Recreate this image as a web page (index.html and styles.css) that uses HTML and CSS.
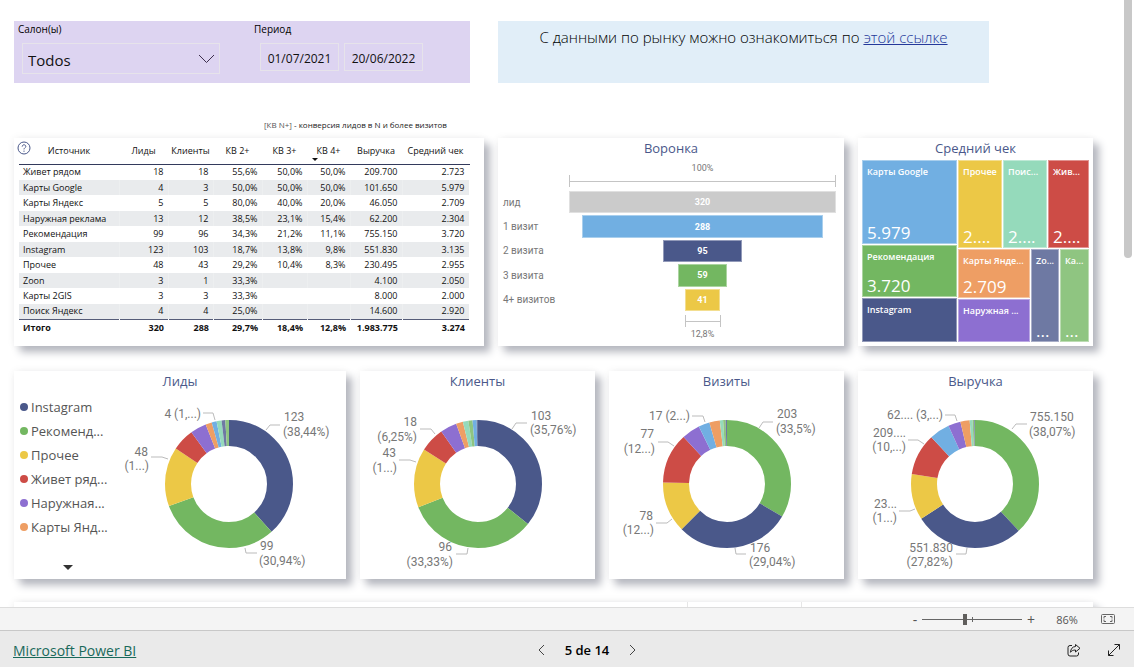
FILE: index.html
```html
<!DOCTYPE html>
<html lang="ru">
<head>
<meta charset="utf-8">
<title>Microsoft Power BI</title>
<link rel="stylesheet" href="styles.css">
</head>
<body>
<main class="report">
  <div class="scroll-thumb"></div>
  <div class="row row-top">
    <section class="slicers">
      <div class="slicer slicer-salon">
        <label for="salon">Салон(ы)</label>
        <div class="select-wrap">
          <select id="salon"><option>Todos</option></select>
          <svg class="select-arrow" viewBox="0 0 17 10" width="17" height="10"><path d="M1 1l7.500 7.500L16 1"/></svg>
        </div>
      </div>
      <div class="slicer">
        <label for="from">Период</label>
        <div class="dates">
          <input id="from" type="text" value="01/07/2021">
          <input type="text" value="20/06/2022" aria-label="Период, конец">
        </div>
      </div>
    </section>
    <section class="market">С данными по рынку можно ознакомиться по <a href="#">этой ссылке</a></section>
  </div>
  <p class="note"><span>[КВ N+]</span> - конверсия лидов в N и более визитов</p>

  <div class="row row-mid">
    <section class="card card-table">
      <svg class="help" viewBox="0 0 14 14" width="14" height="14"><circle cx="7" cy="7" r="6"/><path d="M5.200 5.600c0-2.500 3.700-2.300 3.600-.1C8.800 6.800 7 6.800 7 8.400"/><path d="M7 9.600v1.200"/></svg>
      <table>
        <colgroup><col class="c-src"><col class="c-a"><col class="c-b"><col class="c-a"><col class="c-b"><col class="c-c"><col class="c-rev"><col class="c-avg"></colgroup>
        <thead><tr><th>Источник</th><th>Лиды</th><th>Клиенты</th><th>КВ 2+</th><th>КВ 3+</th><th class="sorted">КВ 4+</th><th>Выручка</th><th>Средний чек</th></tr></thead>
        <tbody>
          <tr><td>Живет рядом</td><td>18</td><td>18</td><td>55,6%</td><td>50,0%</td><td>50,0%</td><td>209.700</td><td>2.723</td></tr>
          <tr><td>Карты Google</td><td>4</td><td>3</td><td>50,0%</td><td>50,0%</td><td>50,0%</td><td>101.650</td><td>5.979</td></tr>
          <tr><td>Карты Яндекс</td><td>5</td><td>5</td><td>80,0%</td><td>40,0%</td><td>20,0%</td><td>46.050</td><td>2.709</td></tr>
          <tr><td>Наружная реклама</td><td>13</td><td>12</td><td>38,5%</td><td>23,1%</td><td>15,4%</td><td>62.200</td><td>2.304</td></tr>
          <tr><td>Рекомендация</td><td>99</td><td>96</td><td>34,3%</td><td>21,2%</td><td>11,1%</td><td>755.150</td><td>3.720</td></tr>
          <tr><td>Instagram</td><td>123</td><td>103</td><td>18,7%</td><td>13,8%</td><td>9,8%</td><td>551.830</td><td>3.135</td></tr>
          <tr><td>Прочее</td><td>48</td><td>43</td><td>29,2%</td><td>10,4%</td><td>8,3%</td><td>230.495</td><td>2.955</td></tr>
          <tr><td>Zoon</td><td>3</td><td>1</td><td>33,3%</td><td></td><td></td><td>4.100</td><td>2.050</td></tr>
          <tr><td>Карты 2GIS</td><td>3</td><td>3</td><td>33,3%</td><td></td><td></td><td>8.000</td><td>2.000</td></tr>
          <tr><td>Поиск Яндекс</td><td>4</td><td>4</td><td>25,0%</td><td></td><td></td><td>14.600</td><td>2.920</td></tr>
        </tbody>
        <tfoot><tr><td>Итого</td><td>320</td><td>288</td><td>29,7%</td><td>18,4%</td><td>12,8%</td><td>1.983.775</td><td>3.274</td></tr></tfoot>
      </table>
    </section>

    <section class="card card-funnel">
      <h2>Воронка</h2>
      <div class="funnel">
        <div class="rate">100%</div>
        <div class="bracket bracket-top"></div>
        <ul class="steps">
          <li><span>лид</span><div><b class="grey" style="width:100%">320</b></div></li>
          <li><span>1 визит</span><div><b class="blue" style="width:90%">288</b></div></li>
          <li><span>2 визита</span><div><b class="indigo" style="width:29.700%">95</b></div></li>
          <li><span>3 визита</span><div><b class="green" style="width:18.400%">59</b></div></li>
          <li><span>4+ визитов</span><div><b class="yellow" style="width:12.800%">41</b></div></li>
        </ul>
        <div class="last-step"><div class="bracket bracket-end"></div></div>
        <div class="rate">12,8%</div>
      </div>
    </section>

    <section class="card card-tree">
      <h2>Средний чек</h2>
      <div class="tree">
        <div class="tree-left">
          <div class="tile blue"><span>Карты Google</span><b>5.979</b></div>
          <div class="tile green"><span>Рекомендация</span><b>3.720</b></div>
          <div class="tile indigo"><span>Instagram</span></div>
        </div>
        <div class="tree-right">
          <div class="tree-top">
            <div class="tile yellow"><span>Прочее</span><b>2....</b></div>
            <div class="tile mint"><span>Поис...</span><b>2....</b></div>
            <div class="tile red"><span>Жив...</span><b>2....</b></div>
          </div>
          <div class="tree-bottom">
            <div class="tree-stack">
              <div class="tile orange"><span>Карты Янде...</span><b>2.709</b></div>
              <div class="tile purple"><span>Наружная ...</span></div>
            </div>
            <div class="tile slate"><span>Zo...</span><b>...</b></div>
            <div class="tile lime"><span>Ка...</span><b>...</b></div>
          </div>
        </div>
      </div>
    </section>
  </div>

  <div class="row row-donuts">
    <section class="card card-leads">
      <h2>Лиды</h2>
      <div class="leads">
        <div class="legend">
          <ul>
            <li><i class="indigo"></i>Instagram</li>
            <li><i class="green"></i>Рекоменд...</li>
            <li><i class="yellow"></i>Прочее</li>
            <li><i class="red"></i>Живет ряд...</li>
            <li><i class="purple"></i>Наружная...</li>
            <li><i class="orange"></i>Карты Янд...</li>
          </ul>
          <button class="more" aria-label="Ещё"></button>
        </div>
        <svg class="donut" viewBox="0 0 226 186">
          <g class="ring" transform="translate(109 91) rotate(-90)">
            <circle class="indigo" r="51" pathLength="320" stroke-dasharray="123 320"/>
            <circle class="green" r="51" pathLength="320" stroke-dasharray="99 320" stroke-dashoffset="-123"/>
            <circle class="yellow" r="51" pathLength="320" stroke-dasharray="48 320" stroke-dashoffset="-222"/>
            <circle class="red" r="51" pathLength="320" stroke-dasharray="18 320" stroke-dashoffset="-270"/>
            <circle class="purple" r="51" pathLength="320" stroke-dasharray="13 320" stroke-dashoffset="-288"/>
            <circle class="orange" r="51" pathLength="320" stroke-dasharray="5 320" stroke-dashoffset="-301"/>
            <circle class="blue" r="51" pathLength="320" stroke-dasharray="4 320" stroke-dashoffset="-306"/>
            <circle class="mint" r="51" pathLength="320" stroke-dasharray="4 320" stroke-dashoffset="-310"/>
            <circle class="slate" r="51" pathLength="320" stroke-dasharray="3 320" stroke-dashoffset="-314"/>
            <circle class="lime" r="51" pathLength="320" stroke-dasharray="3 320" stroke-dashoffset="-317"/>
          </g>
          <path class="lead" d="M146 37l4-5h10M125 155l1 5h11M48 66l-6-2H31M95 27l-2-7H83"/>
          <text x="164" y="28">123</text><text x="163" y="43">(38,44%)</text>
          <text x="140" y="157">99</text><text x="139" y="172">(30,94%)</text>
          <text class="end" x="28" y="63">48</text><text class="end" x="29" y="77">(1...)</text>
          <text class="end" x="81" y="25">4 (1,...)</text>
        </svg>
      </div>
    </section>

    <section class="card">
      <h2>Клиенты</h2>
      <svg class="donut" viewBox="0 0 235 186">
        <g class="ring" transform="translate(118 91) rotate(-90)">
          <circle class="indigo" r="51" pathLength="288" stroke-dasharray="103 288"/>
          <circle class="green" r="51" pathLength="288" stroke-dasharray="96 288" stroke-dashoffset="-103"/>
          <circle class="yellow" r="51" pathLength="288" stroke-dasharray="43 288" stroke-dashoffset="-199"/>
          <circle class="red" r="51" pathLength="288" stroke-dasharray="18 288" stroke-dashoffset="-242"/>
          <circle class="purple" r="51" pathLength="288" stroke-dasharray="12 288" stroke-dashoffset="-260"/>
          <circle class="orange" r="51" pathLength="288" stroke-dasharray="5 288" stroke-dashoffset="-272"/>
          <circle class="mint" r="51" pathLength="288" stroke-dasharray="4 288" stroke-dashoffset="-277"/>
          <circle class="lime" r="51" pathLength="288" stroke-dasharray="3 288" stroke-dashoffset="-281"/>
          <circle class="blue" r="51" pathLength="288" stroke-dasharray="3 288" stroke-dashoffset="-284"/>
          <circle class="slate" r="51" pathLength="288" stroke-dasharray="1 288" stroke-dashoffset="-287"/>
        </g>
        <path class="lead" d="M152 36l4-6h11M108 155l-1 6H96M56 69l-6-2H39M75 41l-4-5H60"/>
        <text x="171" y="27">103</text><text x="170" y="41">(35,76%)</text>
        <text class="end" x="92" y="158">96</text><text class="end" x="93" y="173">(33,33%)</text>
        <text class="end" x="36" y="64">43</text><text class="end" x="37" y="79">(1...)</text>
        <text class="end" x="57" y="33">18</text><text class="end" x="57" y="48">(6,25%)</text>
      </svg>
    </section>

    <section class="card">
      <h2>Визиты</h2>
      <svg class="donut" viewBox="0 0 235 186">
        <g class="ring" transform="translate(118 91) rotate(-90)">
          <circle class="green" r="51" pathLength="606" stroke-dasharray="203 606"/>
          <circle class="indigo" r="51" pathLength="606" stroke-dasharray="176 606" stroke-dashoffset="-203"/>
          <circle class="yellow" r="51" pathLength="606" stroke-dasharray="78 606" stroke-dashoffset="-379"/>
          <circle class="red" r="51" pathLength="606" stroke-dasharray="77 606" stroke-dashoffset="-457"/>
          <circle class="purple" r="51" pathLength="606" stroke-dasharray="28 606" stroke-dashoffset="-534"/>
          <circle class="blue" r="51" pathLength="606" stroke-dasharray="17 606" stroke-dashoffset="-562"/>
          <circle class="orange" r="51" pathLength="606" stroke-dasharray="16 606" stroke-dashoffset="-579"/>
          <circle class="mint" r="51" pathLength="606" stroke-dasharray="5 606" stroke-dashoffset="-595"/>
          <circle class="lime" r="51" pathLength="606" stroke-dasharray="4 606" stroke-dashoffset="-600"/>
          <circle class="slate" r="51" pathLength="606" stroke-dasharray="2 606" stroke-dashoffset="-604"/>
        </g>
        <path class="lead" d="M150 35l4-6h10M126 155l1 6h10M63 126l-5 4H47M65 53l-6-4H49M96 29l-2-6H83"/>
        <text x="168" y="25">203</text><text x="167" y="40">(33,5%)</text>
        <text x="141" y="159">176</text><text x="140" y="173">(29,04%)</text>
        <text class="end" x="44" y="127">78</text><text class="end" x="45" y="141">(12...)</text>
        <text class="end" x="45" y="45">77</text><text class="end" x="46" y="60">(12...)</text>
        <text class="end" x="81" y="27">17 (2...)</text>
      </svg>
    </section>

    <section class="card">
      <h2>Выручка</h2>
      <svg class="donut" viewBox="0 0 235 186">
        <g class="ring" transform="translate(117 91) rotate(-90)">
          <circle class="green" r="51" pathLength="1984" stroke-dasharray="755 1984"/>
          <circle class="indigo" r="51" pathLength="1984" stroke-dasharray="552 1984" stroke-dashoffset="-755"/>
          <circle class="yellow" r="51" pathLength="1984" stroke-dasharray="231 1984" stroke-dashoffset="-1307"/>
          <circle class="red" r="51" pathLength="1984" stroke-dasharray="209 1984" stroke-dashoffset="-1538"/>
          <circle class="blue" r="51" pathLength="1984" stroke-dasharray="102 1984" stroke-dashoffset="-1747"/>
          <circle class="purple" r="51" pathLength="1984" stroke-dasharray="62 1984" stroke-dashoffset="-1849"/>
          <circle class="orange" r="51" pathLength="1984" stroke-dasharray="46 1984" stroke-dashoffset="-1911"/>
          <circle class="mint" r="51" pathLength="1984" stroke-dasharray="15 1984" stroke-dashoffset="-1957"/>
          <circle class="lime" r="51" pathLength="1984" stroke-dasharray="8 1984" stroke-dashoffset="-1972"/>
          <circle class="slate" r="51" pathLength="1984" stroke-dasharray="4 1984" stroke-dashoffset="-1980"/>
        </g>
        <path class="lead" d="M154 36l4-5h11M109 155l-1 6H98M57 116l-5 2H41M66 51l-6-4H50M99 28l-2-6H87"/>
        <text x="172" y="28">755.150</text><text x="171" y="43">(38,07%)</text>
        <text class="end" x="95" y="159">551.830</text><text class="end" x="95" y="173">(27,82%)</text>
        <text class="end" x="39" y="115">23...</text><text class="end" x="39" y="129">(1...)</text>
        <text class="end" x="48" y="44">209....</text><text class="end" x="48" y="58">(10,...)</text>
        <text class="end" x="85" y="26">62.... (3,...)</text>
      </svg>
    </section>
  </div>

  <div class="row row-next"><div></div><div></div><div></div></div>
</main>

<div class="zoombar">
  <button aria-label="Уменьшить">-</button>
  <div class="slider"><input type="range" min="10" max="400" value="176" aria-label="Масштаб"></div>
  <button aria-label="Увеличить">+</button>
  <span class="percent">86%</span>
  <button class="fit" aria-label="По размеру страницы"><svg viewBox="0 0 14 10" width="14" height="10"><rect x=".5" y=".5" width="13" height="9" rx="1"/><path d="M3 4.500v-2h2M9 2.500h2v2M11 5.500v2H9M5 7.500H3v-2"/></svg></button>
</div>

<footer class="footer">
  <a href="#">Microsoft Power BI</a>
  <nav class="pager">
    <button aria-label="Назад"><svg viewBox="0 0 7 12" width="7" height="12"><path d="M6 1L1 6l5 5"/></svg></button>
    <span>5 de 14</span>
    <button aria-label="Вперёд"><svg viewBox="0 0 7 12" width="7" height="12"><path d="M1 1l5 5-5 5"/></svg></button>
  </nav>
  <div class="actions">
    <button aria-label="Поделиться"><svg viewBox="0 0 14 14" width="14" height="14"><path d="M5 2.500H3a2 2 0 0 0-2 2V11a2 2 0 0 0 2 2h6.500a2 2 0 0 0 2-2v-1.500"/><path d="M8.500 1.500L13 5.300 8.500 9V7C6 7 4.700 7.700 3.500 9.300 3.700 6 5.300 3.700 8.500 3.500z"/></svg></button>
    <button aria-label="Во весь экран"><svg viewBox="0 0 14 14" width="14" height="14"><path d="M1.500 12.500l11-11M7.500 1.500h5v5M1.500 7.500v5h5"/></svg></button>
  </div>
</footer>
</body>
</html>
```
FILE: styles.css
```css
* { box-sizing: border-box; }

body {
  margin: 0;
  height: 100vh;
  display: flex;
  flex-direction: column;
  overflow: hidden;
  background: #fff;
  color: #000;
  font-family: "Open Sans", "Noto Sans", sans-serif;
}

h2, p, ul { margin: 0; padding: 0; }
ul { list-style: none; }
button { border: 0; padding: 0; background: none; font: inherit; color: inherit; display: flex; align-items: center; justify-content: center; }
svg { fill: none; display: block; }

.grey { --c: #cbcbcb; }
.blue { --c: #71afe2; }
.indigo { --c: #4a588a; }
.green { --c: #73b761; }
.yellow { --c: #ecc846; }
.mint { --c: #95dabb; }
.red { --c: #cd4c46; }
.orange { --c: #ee9e64; }
.purple { --c: #8d6fd1; }
.slate { --c: #6e79a3; }
.lime { --c: #8fc581; }

.report {
  position: relative;
  flex: 1;
  min-height: 0;
  overflow: hidden;
  padding: 21px 41px 0 14px;
}

.scroll-thumb {
  position: absolute;
  top: -4px;
  right: 2px;
  width: 8px;
  height: 262px;
  border-radius: 4px;
  background: #c8c8c8;
}

.row { display: grid; column-gap: 14px; }

/* Slicers and market link */
.row-top { grid-template-columns: 456fr 491fr 76fr; column-gap: 28px; height: 62px; }
.slicers { display: flex; background: #ddd4f1; padding: 1px 4px; }
.slicer label { display: block; font-size: 10px; line-height: 14px; }
.slicer-salon { width: 236px; }
.select-wrap { position: relative; width: 198px; margin: 7px 0 0 4px; }
.select-wrap select {
  appearance: none;
  width: 100%;
  height: 31px;
  padding: 4px 5px 2px;
  border: 1px solid #e6e3ea;
  border-radius: 0;
  background: transparent;
  color: #111;
  font: 15px "Open Sans", sans-serif;
}
.select-arrow { position: absolute; right: 5px; top: 11px; stroke: #3d2f4d; }
.dates { display: flex; gap: 5px; margin: 7px 0 0 6px; }
.dates input {
  width: 79px;
  height: 28px;
  padding: 3px 2px 0;
  border: 1px solid #e6e3ea;
  background: transparent;
  color: #111;
  text-align: center;
  font: 12px "Open Sans", sans-serif;
}
.market { background: #e1eef8; padding-top: 5px; text-align: center; font-size: 15px; font-weight: 300; line-height: 22px; color: #000; }
.market a { color: #24389a; }

.note { padding-left: 250px; margin: 35px 0 6px; font-size: 8px; line-height: 14px; color: #222; }
.note span { color: #555; }

.card {
  position: relative;
  min-width: 0;
  height: 208px;
  background: #fff;
  box-shadow: 6px 6px 8px #b4b6be, 0 0 8px rgba(0, 0, 0, .06);
}
.card h2 {
  height: 22px;
  font-size: 13px;
  line-height: 20px;
  font-weight: 400;
  text-align: center;
  color: #4a588a;
}
.row-mid { grid-template-columns: 470fr 346fr 235fr; margin-bottom: 25px; }

/* Source table */
.card-table { padding: 4px 15px 0 5px; }
.help { position: absolute; left: 3px; top: 3px; stroke: #4a588a; }
table { width: 100%; table-layout: fixed; border-collapse: collapse; font-size: 9px; line-height: 12px; color: #111; }
.c-src { width: 100px; }
.c-a { width: 49px; }
.c-b { width: 45px; }
.c-c { width: 43px; }
.c-rev { width: 52px; }
.c-avg { width: 67px; }
th, td { padding: 0 4px; text-align: right; white-space: nowrap; }
th { position: relative; height: 22px; padding: 0; font-weight: 400; text-align: center; padding-bottom: 4px; border-bottom: 1px solid #333a5c; }
.sorted::after {
  content: "";
  position: absolute;
  left: 5px;
  bottom: 3px;
  border: 3px solid transparent;
  border-top-color: #111;
  border-bottom: 0;
}
td:first-child { text-align: left; }
tbody td { height: 16px; border-right: 1px solid #fff3; }
tbody tr:nth-child(even) td { height: 15px; background: #e9ebed; }
tfoot td { height: 17px; border-top: 1px solid #555c78; font-weight: 700; }

/* Funnel */
.funnel { padding: 0 8px 0 5px; color: #777; font-family: Roboto, sans-serif; font-size: 9px; }
.rate { margin-left: 66px; text-align: center; line-height: 14px; }
.bracket {
  height: 12px;
  border: solid #c4c4c4;
  border-width: 0 1px;
  background: linear-gradient(#c4c4c4, #c4c4c4) center / 100% 1px no-repeat;
}
.bracket-top { margin: 0 0 4px 66px; }
.last-step { margin: 4px 0 0 66px; }
.bracket-end { width: 36px; margin: 0 auto; }
.card-funnel h2 { height: 23px; }
.steps { display: grid; grid-auto-rows: 1fr; gap: 2px; height: 120px; }
.steps li { display: grid; grid-template-columns: 66px 1fr; align-items: center; }
.steps span { font-size: 10px; }
.steps div { display: flex; justify-content: center; height: 100%; }
.steps b { display: flex; align-items: center; justify-content: center; background: var(--c); color: #fff; border: 1px solid #ffffff66; }

/* Treemap */
.tree, .tree-left, .tree-right, .tree-top, .tree-bottom, .tree-stack { display: grid; gap: 1px; min-width: 0; min-height: 0; }
.tree { grid-template-columns: 95fr 131fr; height: 182px; margin: 0 4px; }
.tree-left { grid-template-rows: 84fr 51fr 44fr; }
.tree-right { grid-template-rows: 88fr 93fr; }
.tree-top { grid-template-columns: 44fr 44fr 41fr; }
.tree-bottom { grid-template-columns: 72fr 28fr 29fr; }
.tree-stack { grid-template-rows: 49fr 43fr; }
.tile {
  min-width: 0;
  min-height: 0;
  display: flex;
  flex-direction: column;
  justify-content: space-between;
  overflow: hidden;
  padding: 4px 0 0 4px;
  border: 1px solid #ffffff66;
  background: var(--c);
  color: #fff;
  white-space: nowrap;
}
.tile span { font-size: 9px; line-height: 13px; font-weight: 600; }
.tile b { font-size: 17px; line-height: 20px; font-weight: 400; }

/* Donuts */
.row-donuts { grid-template-columns: 332fr 235fr 235fr 235fr; margin-bottom: 23px; }
.leads { display: flex; }
.legend { flex: 0 0 106px; padding: 2px 0 0 6px; font-size: 13px; line-height: 24px; color: #555; white-space: nowrap; }
.legend li { display: flex; align-items: center; gap: 3px; }
.legend i { width: 8px; height: 8px; border-radius: 50%; background: var(--c); }
.more { width: 10px; height: 5px; margin: 26px 0 0 43px; background: #333; clip-path: polygon(0 0, 100% 0, 50% 100%); }
.donut { flex: 1; width: 100%; min-width: 0; height: 186px; }
.ring circle { stroke: var(--c); stroke-width: 26; }
.lead { stroke: #bbb; }
.donut text { fill: #777; font: 12px Roboto, sans-serif; }
.donut .end { text-anchor: end; }

.row-next { grid-template-columns: 673fr 113fr 291fr; column-gap: 1px; height: 40px; background: #e6e6e6; box-shadow: 6px 6px 8px #b4b6be, 0 0 8px rgba(0, 0, 0, .08); }
.row-next div { background: #fff; }

/* Zoom bar */
.zoombar {
  height: 23px;
  display: flex;
  align-items: center;
  justify-content: flex-end;
  padding-right: 19px;
  border-top: 1px solid #ddd;
  background: #f4f4f4;
  color: #555;
  font-size: 12px;
}
.zoombar button { width: 14px; height: 20px; font-size: 14px; }
.slider { width: 100px; height: 20px; margin-right: 2px; position: relative; display: flex; align-items: center; }
.slider::before { content: ""; position: absolute; left: 50px; top: 8px; width: 1px; height: 5px; background: #666; }
.slider input { appearance: none; width: 100%; height: 20px; margin: 0; background: linear-gradient(#666, #666) center / 100% 1px no-repeat; }
.slider input::-webkit-slider-thumb { appearance: none; width: 4px; height: 11px; background: #605e5c; }
.percent { width: 46px; text-align: center; margin: 0 11px 0 6px; font-size: 11px; }
.zoombar .fit { stroke: #666; }

/* Footer */
.footer {
  height: 37px;
  display: grid;
  grid-template-columns: 526fr auto 486fr;
  align-items: center;
  padding: 2px 13px 0;
  border-top: 1px solid #c8c8c8;
  background: #eaeaea;
  font-size: 13px;
}
.footer a { justify-self: start; font-size: 14px; color: #19695a; }
.pager { display: flex; align-items: center; gap: 20px; font-weight: 600; }
.pager svg { stroke: #444; }
.actions { display: flex; gap: 26px; justify-content: flex-end; }
.actions svg { stroke: #222; }
```
